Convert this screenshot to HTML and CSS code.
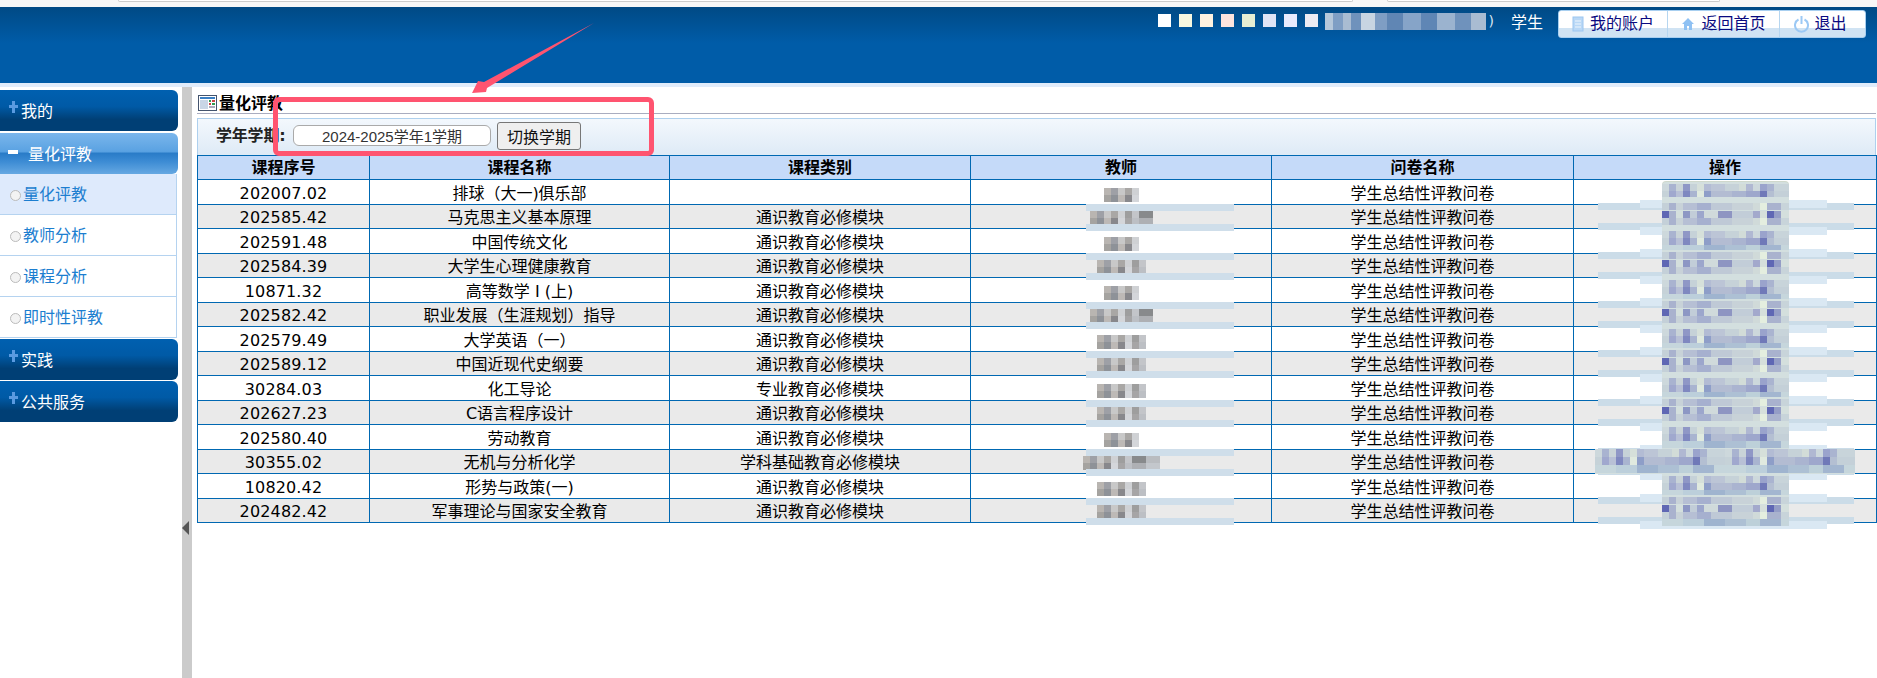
FILE: index.html
```html
<!DOCTYPE html>
<html lang="zh-CN">
<head>
<meta charset="utf-8">
<title>量化评教</title>
<link rel="stylesheet" href="styles.css">
</head>
<body>
<div class="chrome"><span class="addr addr-a"></span><span class="addr addr-b"></span></div>
<header class="top">
  <div class="userbar">
    <div class="chips"><i class="c1"></i><i class="c2"></i><i class="c3"></i><i class="c4"></i><i class="c5"></i><i class="c6"></i><i class="c7"></i><i class="c8"></i></div>
    <span class="uname"></span><span class="paren">)</span>
    <span class="role">学生</span>
    <nav class="topbtns">
      <a class="tb tb1"><svg width="12" height="16" viewBox="0 0 12 16"><rect x="1" y="1" width="10" height="14" fill="#b9d8f6" stroke="#9cc6f0"/><path d="M3 5h6M3 8h6M3 11h6" stroke="#eef6fd"/></svg>我的账户</a>
      <a class="tb tb2"><svg width="14" height="14" viewBox="0 0 14 14"><path d="M7 1L1 7h2v6h3V9h2v4h3V7h2z" fill="#8fc1f3"/></svg>返回首页</a>
      <a class="tb tb3"><svg width="15" height="18" viewBox="0 0 15 18"><path d="M4.5 4.5a6.5 6.5 0 1 0 6 0" fill="none" stroke="#9cc9f5" stroke-width="2"/><path d="M7.5 1v8" stroke="#9cc9f5" stroke-width="2"/></svg>退出</a>
    </nav>
  </div>
</header>
<div class="band"></div>
<div class="layout">
  <aside class="side">
    <div class="head"><span class="plus"></span>我的</div>
    <div class="head open"><span class="minus"></span>量化评教</div>
    <ul class="sub">
      <li class="on">量化评教</li>
      <li>教师分析</li>
      <li>课程分析</li>
      <li>即时性评教</li>
    </ul>
    <div class="head"><span class="plus"></span>实践</div>
    <div class="head"><span class="plus"></span>公共服务</div>
  </aside>
  <div class="split"><span class="tri"></span></div>
  <main class="main">
    <h1 class="title"><svg width="19" height="16" viewBox="0 0 19 16"><rect x=".5" y=".5" width="18" height="15" fill="#fff" stroke="#44546e"/><rect x="2" y="2" width="15" height="2" fill="#3a7fc4"/><rect x="2" y="5" width="8" height="9" fill="#c9d6e6"/><rect x="11" y="5" width="2" height="2" fill="#2f9a50"/><rect x="14" y="5" width="3" height="2" fill="#c44"/><rect x="11" y="8" width="2" height="2" fill="#c44"/><rect x="14" y="8" width="3" height="2" fill="#2f9a50"/><rect x="11" y="11" width="6" height="2" fill="#aab"/></svg>量化评教</h1>
    <div class="bar">
      <label class="lab">学年学期:</label>
      <input class="term" value="2024-2025学年1学期" readonly>
      <button class="sw">切换学期</button>
    </div>
    <table class="grid">
      <colgroup><col class="w1"><col class="w2"><col class="w3"><col class="w4"><col class="w5"><col class="w6"></colgroup>
      <thead><tr><th>课程序号</th><th>课程名称</th><th>课程类别</th><th>教师</th><th>问卷名称</th><th>操作</th></tr></thead>
      <tbody>
        <tr><td>202007.02</td><td>排球（大一)俱乐部</td><td></td><td class="tc"><span class="tm t1"></span></td><td>学生总结性评教问卷</td><td class="ac"><span class="am first"></span></td></tr>
        <tr><td>202585.42</td><td>马克思主义基本原理</td><td>通识教育必修模块</td><td class="tc"><span class="tm t3"></span></td><td>学生总结性评教问卷</td><td class="ac"><span class="am"></span></td></tr>
        <tr><td>202591.48</td><td>中国传统文化</td><td>通识教育必修模块</td><td class="tc"><span class="tm t1"></span></td><td>学生总结性评教问卷</td><td class="ac"><span class="am"></span></td></tr>
        <tr><td>202584.39</td><td>大学生心理健康教育</td><td>通识教育必修模块</td><td class="tc"><span class="tm t2"></span></td><td>学生总结性评教问卷</td><td class="ac"><span class="am"></span></td></tr>
        <tr><td>10871.32</td><td>高等数学 Ⅰ (上)</td><td>通识教育必修模块</td><td class="tc"><span class="tm t1"></span></td><td>学生总结性评教问卷</td><td class="ac"><span class="am"></span></td></tr>
        <tr><td>202582.42</td><td>职业发展（生涯规划）指导</td><td>通识教育必修模块</td><td class="tc"><span class="tm t3"></span></td><td>学生总结性评教问卷</td><td class="ac"><span class="am"></span></td></tr>
        <tr><td>202579.49</td><td>大学英语（一）</td><td>通识教育必修模块</td><td class="tc"><span class="tm t2"></span></td><td>学生总结性评教问卷</td><td class="ac"><span class="am"></span></td></tr>
        <tr><td>202589.12</td><td>中国近现代史纲要</td><td>通识教育必修模块</td><td class="tc"><span class="tm t2"></span></td><td>学生总结性评教问卷</td><td class="ac"><span class="am"></span></td></tr>
        <tr><td>30284.03</td><td>化工导论</td><td>专业教育必修模块</td><td class="tc"><span class="tm t2"></span></td><td>学生总结性评教问卷</td><td class="ac"><span class="am"></span></td></tr>
        <tr><td>202627.23</td><td>C语言程序设计</td><td>通识教育必修模块</td><td class="tc"><span class="tm t2"></span></td><td>学生总结性评教问卷</td><td class="ac"><span class="am"></span></td></tr>
        <tr><td>202580.40</td><td>劳动教育</td><td>通识教育必修模块</td><td class="tc"><span class="tm t1"></span></td><td>学生总结性评教问卷</td><td class="ac"><span class="am"></span></td></tr>
        <tr><td>30355.02</td><td>无机与分析化学</td><td>学科基础教育必修模块</td><td class="tc"><span class="tm t4"></span></td><td>学生总结性评教问卷</td><td class="ac"><span class="am wide"></span></td></tr>
        <tr><td>10820.42</td><td>形势与政策(一)</td><td>通识教育必修模块</td><td class="tc"><span class="tm t2"></span></td><td>学生总结性评教问卷</td><td class="ac"><span class="am"></span></td></tr>
        <tr><td>202482.42</td><td>军事理论与国家安全教育</td><td>通识教育必修模块</td><td class="tc"><span class="tm t2"></span></td><td>学生总结性评教问卷</td><td class="ac"><span class="am"></span></td></tr>
      </tbody>
    </table>
  </main>
</div>
<div class="mark-box"></div>
<svg class="mark-arrow" width="140" height="90" viewBox="0 0 140 90"><polygon points="134,1 24,60 18,59 12,71 26,70 27,66" fill="#ff5470"/></svg>
</body>
</html>
```
FILE: styles.css
```css
:root {
  --a1: linear-gradient(90deg,#cdd8dc 0 7px,#a9b3d0 7px 14px,#c9d3d8 14px 21px,#8f97c6 21px 28px,#c6d2d8 28px 35px,#d6e0da 35px 42px,#b3bcd4 42px 49px,#bcc5d6 49px 63px,#c6d2d8 63px 77px,#d2dcd8 77px 84px,#b0b8d2 84px 91px,#cdd8dc 91px 98px,#9aa3cc 98px 105px,#aab4d0 105px 112px,#c8d4da 112px 127px);
  --a2: linear-gradient(90deg,#c6d2d8 0 7px,#a0a8ce 7px 14px,#b8c0d6 14px 21px,#7f88c0 21px 28px,#a9b4d0 28px 35px,#e0eadf 35px 42px,#8e9ec8 42px 49px,#b3bcd2 49px 70px,#aab4d0 70px 84px,#9ea7cc 84px 98px,#7079b8 98px 105px,#b4bfd2 105px 112px,#c4d0d8 112px 127px);
  --a3: linear-gradient(90deg,#c6d6dc 0 21px,#bccfdb 21px 42px,#9fb4cf 42px 63px,#adc0d4 63px 84px,#bdd0d9 84px 98px,#a3b6d0 98px 119px,#c6d6dc 119px 127px);
  --a4: linear-gradient(90deg,#5f67b4 0 7px,#a9b2ce 7px 14px,#d4dfdd 14px 21px,#8d97c4 21px 28px,#c2cdd8 28px 35px,#9ca6cc 35px 42px,#d0dadb 42px 56px,#8e95c2 56px 70px,#c2cdd8 70px 91px,#a3a9cc 91px 98px,#d5dfdb 98px 105px,#5f67b4 105px 112px,#949dc6 112px 119px,#d4dfdd 119px 127px);
  --a5: linear-gradient(90deg,#c4d0d8 0 7px,#a9b2ce 7px 14px,#c8d2d8 14px 21px,#b6bfd4 21px 35px,#a6b0cf 35px 49px,#bfc9d6 49px 70px,#c8d2d8 70px 91px,#d0dad9 91px 98px,#e4eedf 98px 105px,#a9b2ce 105px 119px,#c8d4da 119px 127px);
  --t1: linear-gradient(90deg,#a5a3a0 0 7px,#8e9298 7px 14px,#bdb9b6 14px 21px,#88888c 21px 28px,#d4d6da 28px 35px,#a6a5a6 35px 42px,#bcbfc4 42px 49px,#aeb0b4 49px 63px,#c3c7cc 63px 91px);
  --t2: linear-gradient(90deg,#b9b5b1 0 7px,#9ea0a6 7px 14px,#c8c8c8 14px 21px,#a9a7a5 21px 28px,#cfd1d4 28px 35px,#9e9e9e 35px 42px,#c3c5c9 42px 49px,#888a8c 49px 63px,#b9bcc0 63px 91px);
}
* { box-sizing: border-box; }
html, body { margin: 0; height: 100%; }
body {
  width: 1877px;
  height: 678px;
  overflow: hidden;
  position: relative;
  background: #fff;
  color: #000;
  font: 16px "DejaVu Sans", "Noto Sans CJK SC", sans-serif;
}
.chrome { height: 7px; background: #f7f7f7; display: flex; padding-left: 118px; gap: 34px; }
.addr { height: 2px; background: #fff; border: 1px solid #ccc; border-top: 0; border-radius: 0 0 6px 6px; }
.addr-a { width: 1235px; }
.addr-b { width: 333px; }
.top {
  height: 76px;
  background: linear-gradient(180deg,#004a85 0,#005ca8 36px,#005ca8 100%);
  padding: 3px 11px 0 0;
}
.userbar { display: flex; justify-content: flex-end; align-items: flex-start; }
.chips { display: flex; gap: 8px; margin: 4px 7px 0 0; }
.chips i { width: 13px; height: 13px; display: block; }
.c1 { background: #fff; } .c2 { background: #f8f8e0; } .c3 { background: #fff2e0; } .c4 { background: #fde4de; }
.c5 { background: #e6eed3; } .c6 { background: #dfe4f5; } .c7 { background: #e8ebfd; } .c8 { background: #ecebf2; }
.uname {
  width: 161px; height: 17px; margin-top: 3px;
  background: linear-gradient(90deg,#b5c7da 0 8px,#7f9ec4 8px 18px,#a9bcd2 18px 26px,#6f92bc 26px 36px,#c8d5e2 36px 50px,#7f9ec4 50px 62px,#6086b4 62px 78px,#86a4c8 78px 96px,#5f86b5 96px 112px,#9bb3cf 112px 130px,#6f92bc 130px 146px,#a9bcd2 146px 161px);
  filter: blur(.6px);
}
.paren { color: #dbe7f2; margin: 3px 17px 0 3px; font-size: 14px; line-height: 17px; }
.role { color: #fff; line-height: 24px; margin: 1px 15px 0 0; }
.topbtns {
  display: flex; height: 28px;
  border: 1px solid #a8cff0; border-radius: 3px;
  background: linear-gradient(180deg,#fff 0 17px,#d0e3f3 17px 100%);
  color: #0a0a80;
}
.tb { display: flex; align-items: center; justify-content: center; gap: 6px; line-height: 26px; border-right: 1px solid #b6d6f0; }
.tb:last-child { border-right: 0; }
.tb1 { width: 109px; }
.tb2 { width: 112px; }
.tb3 { width: 85px; padding-right: 4px; gap: 5px; }
.band { height: 4px; background: #e0ecfb; }
.layout { display: flex; height: 591px; }
.side { width: 178px; margin-right: 4px; padding-top: 3px; flex: none; }
.head {
  height: 41px; margin-bottom: 2px; padding-left: 21px;
  line-height: 43px; color: #fff;
  border-radius: 0 6px 6px 0;
  background: linear-gradient(180deg,#0060b0 0,#005aa6 40%,#003f75 72%,#003f75 100%);
  position: relative;
}
.head.open {
  padding-left: 28px; margin-bottom: 0; line-height: 44px;
  background: linear-gradient(180deg,#7ab6ec 0,#5aa2e2 45%,#2a7cc8 50%,#3d8cd4 70%,#66a8e2 100%);
}
.sub + .head { margin-bottom: 1px; }
.plus { position: absolute; left: 9px; top: 11px; width: 9px; height: 12px; background: linear-gradient(#5a9ae0,#5a9ae0) center/3px 12px no-repeat, linear-gradient(#5a9ae0,#5a9ae0) center 4px/9px 3px no-repeat; }
.minus { position: absolute; left: 8px; top: 17px; width: 10px; height: 4px; background: #fff; }
.sub { list-style: none; margin: 0 0 1px; padding: 0; width: 177px; border-right: 1px solid #b5d3f0; color: #1c7ed0; }
.sub li { height: 41px; line-height: 42px; padding-left: 23px; border-bottom: 1px solid #b5d3f0; position: relative; }
.sub li.on { background: #deeafc; }
.sub li::before { content: ""; position: absolute; left: 10px; top: 16px; width: 9px; height: 9px; border-radius: 50%; background: #f3f3f3; border: 1px solid #bbb; }
.split { width: 10px; flex: none; margin-right: 5px; background: #cbcbcb; padding-top: 434px; }
.tri { display: block; width: 0; height: 0; border: 7px solid transparent; border-left: 0; border-right-color: #555; }
.main { width: 1679px; flex: none; padding-top: 3px; }
.title { margin: 0; height: 24px; border-bottom: 1px solid #a9adc0; font-size: 16px; font-weight: 700; line-height: 17px; display: flex; align-items: flex-end; gap: 2px; padding: 0 0 1px 1px; }
.title svg { margin-bottom: 1px; }
.bar {
  height: 37px; margin-top: 4px; padding: 3px 0 0 18px;
  border: 1px solid #aed0ee; border-bottom: 0;
  background: linear-gradient(180deg,#f3f8fd,#deeaf6);
  display: flex; align-items: flex-start; font-size: 16px;
}
.lab { font-weight: 700; color: #222; line-height: 27px; margin-right: 5px; width: 72px; flex: none; white-space: nowrap; letter-spacing: -.2px; }
.term {
  width: 198px; height: 21px; margin-top: 3px; padding: 0;
  border: 1px solid #aaa; border-radius: 6px; background: #fff; text-align: center;
  font: 15px "Liberation Sans", "Noto Sans CJK SC", sans-serif; color: #333;
}
.sw {
  width: 84px; height: 28px; margin-left: 6px; padding: 0;
  background: #efefef; border: 1px solid #777; border-radius: 3px;
  font: 16px "Noto Sans CJK SC", sans-serif; color: #111;
}
.grid { border-collapse: collapse; table-layout: fixed; width: 1679px; }
.w1 { width: 172px; } .w2 { width: 300px; } .w3 { width: 301px; } .w4 { width: 301px; } .w5 { width: 302px; } .w6 { width: 303px; }
.grid th, .grid td { border: 1px solid #0068b2; padding: 0; text-align: center; line-height: 20px; white-space: nowrap; }
.grid thead tr { height: 24px; }
.grid th { background: #c5daf9; font-weight: 700; }
.grid tbody tr { height: 25px; }
.grid tbody tr:nth-child(even) { height: 24px; }
.grid tbody td { padding-top: 3px; }
.grid tbody tr:nth-child(even) td { padding-top: 2px; }
.grid tbody td:first-child { letter-spacing: .15px; }
.grid tbody tr:nth-child(even) td { background: #eaeaea; }
.tc, .ac { position: relative; }
.tm {
  position: absolute; left: 0; right: 0; top: 8px; margin: auto; height: 14px; width: 49px;
  background: var(--t2) 0 0/91px 7px no-repeat, var(--t1) 0 7px/91px 7px no-repeat;
  filter: blur(.6px);
}
.t1 { width: 35px; }
.t2 { width: 49px; }
.t3 { width: 63px; }
.t4 { width: 77px; }
tr:nth-child(even) .tm { top: 6px; }
tr:nth-child(even) .tc::before, tr:nth-child(even) .tc::after {
  content: ""; position: absolute; height: 7px; background: #cfdeea; left: 115px; width: 148px; z-index: 2;
}
tr:nth-child(even) .tc::before { top: -1px; }
tr:nth-child(even) .tc::after { bottom: -3px; }
tr:nth-child(even) .ac::before, tr:nth-child(even) .ac::after {
  content: ""; position: absolute; left: 24px; width: 256px; z-index: 1;
  background-repeat: no-repeat;
  background-image: linear-gradient(#dae8f3,#dae8f3), linear-gradient(#cbdce8,#cbdce8);
}
tr:nth-child(even) .ac::before {
  top: -5px; height: 10px;
  background-position: 42px 0, 0 3px;
  background-size: 187px 8px, 256px 7px;
}
tr:nth-child(even) .ac::after {
  bottom: -7px; height: 12px;
  background-position: 42px 4px, 0 0;
  background-size: 187px 8px, 256px 7px;
}
.am {
  position: absolute; left: 88px; width: 127px; top: -4px; bottom: -4px; z-index: 3;
  background: var(--a1) 0 6px/127px 7px no-repeat, var(--a2) 0 13px/127px 7px no-repeat, var(--a3) 0 20px/127px 7px no-repeat, #d3dfdf;
  filter: blur(.6px);
}
tr:nth-child(even) .am { background: var(--a5) 0 2px/127px 7px no-repeat, var(--a4) 0 10px/127px 7px no-repeat, var(--a5) 0 17px/127px 7px no-repeat, var(--a3) 0 24px/127px 7px no-repeat, #d3dfdf; }
tr .am.first { top: 2px; border-radius: 4px 4px 0 0; box-shadow: 0 -1px 0 #cfd8cc; background: var(--a1) 0 2px/127px 7px no-repeat, var(--a2) 0 8px/127px 7px no-repeat, #d3dfdf; }
tr .am.wide {
  left: 21px; width: 260px; top: -1px; bottom: -1px; z-index: 4;
  background: var(--a1) 0 0/130px 8px repeat-x, var(--a2) 0 8px/130px 8px repeat-x, var(--a3) 0 16px/130px 8px repeat-x, #d3dfdf;
}
.mark-box { position: absolute; left: 273px; top: 97px; width: 381px; height: 59px; border: 5px solid #ff5470; border-radius: 6px; }
.mark-arrow { position: absolute; left: 460px; top: 22px; }
```
